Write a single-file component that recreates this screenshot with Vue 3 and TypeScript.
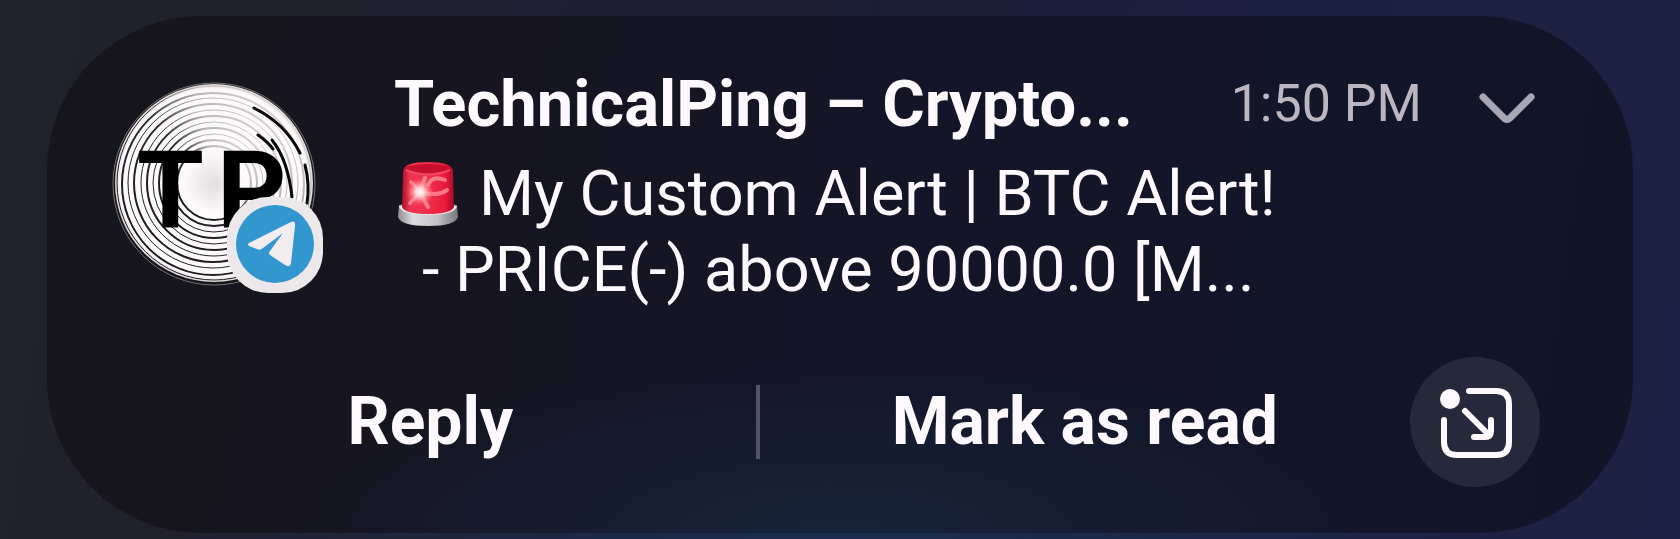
<script setup lang="ts">
const notification = {
  sender: 'TechnicalPing – Crypto...',
  time: '1:50 PM',
  headline: 'My Custom Alert | BTC Alert!',
  detail: '- PRICE(-) above 90000.0 [M...',
}

const rings: { r: number; cx: number; cy: number; w: number }[] = [
  { r: 97, cx: 103, cy: 102, w: 1 },
  { r: 91, cx: 102, cy: 103, w: 2 },
  { r: 85, cx: 102, cy: 102, w: 1 },
  { r: 79, cx: 102, cy: 102, w: 2 },
  { r: 73, cx: 103, cy: 102, w: 1 },
  { r: 67, cx: 103, cy: 102, w: 2 },
  { r: 61, cx: 103, cy: 102, w: 1 },
  { r: 55, cx: 103, cy: 102, w: 2 },
  { r: 49, cx: 103, cy: 102, w: 1 },
  { r: 43, cx: 103, cy: 102, w: 2 },
  { r: 37, cx: 103, cy: 102, w: 2 },
]
</script>

<template>
  <main class="screen">
    <article class="card">
      <div class="content">
        <div class="avatar">
          <svg class="logo" viewBox="0 0 206 206" role="img" aria-label="TechnicalPing">
            <defs>
              <radialGradient id="disc" cx="0.5" cy="0.5" r="0.5">
                <stop offset="0" stop-color="#e2dee1" />
                <stop offset="0.3" stop-color="#fdf9fa" />
                <stop offset="0.95" stop-color="#fdf9fa" />
                <stop offset="1" stop-color="#d8d4d2" />
              </radialGradient>
              <linearGradient id="ringTone" x1="0" y1="1" x2="1" y2="0">
                <stop offset="0" stop-color="#16141c" />
                <stop offset="0.5" stop-color="#2c2a30" />
                <stop offset="0.7" stop-color="#b5b1b4" />
                <stop offset="1" stop-color="#ece8ea" />
              </linearGradient>
            </defs>
            <circle cx="103" cy="103" r="101" fill="#16141c" stroke="#77736f" stroke-width="1" />
            <circle cx="103" cy="102" r="99" fill="url(#disc)" />
            <circle
              v-for="ring in rings"
              :key="ring.r"
              :cx="ring.cx"
              :cy="ring.cy"
              :r="ring.r"
              fill="none"
              stroke="url(#ringTone)"
              :stroke-width="ring.w"
            />
            <g fill="none" stroke="#08070a" stroke-width="3" stroke-linecap="round">
              <path d="M143 27Q174 42 189 72" />
              <path d="M147 54Q157 61 162 68" />
              <path d="M161 59Q177 79 181 116" />
              <path d="M194 84Q199 103 196 122" />
            </g>
            <g class="monogram">
              <text x="26" y="146">T</text>
              <text x="106" y="146">P</text>
            </g>
          </svg>
          <svg class="badge" viewBox="0 0 96 96" role="img" aria-label="Telegram">
            <rect width="96" height="96" rx="41" fill="#ece8e9" />
            <circle cx="48" cy="47" r="39" fill="#3296cf" />
            <path
              d="M22 46L64 25Q69 23 68 29L64 66Q63 71 58 68L43 58Q41 56 43 54L56 36L36 51Q33 54 30 52L22 49Q20 47 22 46Z"
              fill="#f1edee"
            />
          </svg>
        </div>

        <div class="message">
          <header class="heading">
            <h1 class="sender">{{ notification.sender }}</h1>
            <time class="time" datetime="13:50">{{ notification.time }}</time>
            <button class="expand" type="button" aria-label="Expand notification">
              <svg viewBox="0 0 56 32">
                <path d="M4 4L25 25Q28 28 31 25L52 4" />
              </svg>
            </button>
          </header>
          <p class="line">
            <svg class="siren" viewBox="0 0 62 66" role="img" aria-label="Alert">
              <defs>
                <linearGradient id="dome" x1="0" x2="1">
                  <stop offset="0" stop-color="#a8102a" />
                  <stop offset="0.15" stop-color="#ef3550" />
                  <stop offset="0.5" stop-color="#f0304b" />
                  <stop offset="0.85" stop-color="#e8183a" />
                  <stop offset="1" stop-color="#a50a28" />
                </linearGradient>
                <linearGradient id="base" x1="0" x2="1">
                  <stop offset="0" stop-color="#8e8e92" />
                  <stop offset="0.25" stop-color="#dcdcde" />
                  <stop offset="0.65" stop-color="#c4c4c8" />
                  <stop offset="1" stop-color="#77777c" />
                </linearGradient>
                <radialGradient id="glow">
                  <stop offset="0" stop-color="#ffffff" />
                  <stop offset="0.3" stop-color="#ffd5d4" />
                  <stop offset="1" stop-color="#ff6670" stop-opacity="0" />
                </radialGradient>
              </defs>
              <path d="M2 44Q31 38 60 44L61 56Q58 65 31 65Q4 65 1 56Z" fill="url(#base)" />
              <path d="M2 45Q31 40 60 45Q58 54 31 54Q4 54 2 45Z" fill="#e9e8ea" />
              <path d="M6 10Q7 1 31 1Q55 1 56 10L57 46Q54 53 31 53Q8 53 5 46Z" fill="url(#dome)" />
              <ellipse cx="31" cy="8" rx="23" ry="5" fill="#c80f2d" />
              <path d="M9 9Q31 18 53 9" fill="none" stroke="#f04a60" stroke-width="2" />
              <g fill="none" stroke="#ffa0a4" stroke-width="4" stroke-linecap="round" opacity="0.7">
                <path d="M23 31L14 21M23 31L28 17M23 31L13 42M23 31L31 46" />
                <path d="M24 31Q40 36 50 29M31 24Q35 14 48 19" />
              </g>
              <circle cx="23" cy="31" r="14" fill="url(#glow)" />
            </svg>
            <span>{{ notification.headline }}</span>
          </p>
          <p class="line detail">{{ notification.detail }}</p>
        </div>
      </div>

      <footer class="actions">
        <button class="action" type="button">Reply</button>
        <span class="divider"></span>
        <button class="action" type="button">Mark as read</button>
        <button class="popout" type="button" aria-label="Open in pop-up view">
          <svg viewBox="0 0 74 72">
            <g fill="none" stroke="#fdf8fc" stroke-width="6" stroke-linecap="round" stroke-linejoin="round">
              <path d="M31 5H58Q71 5 71 18V56Q71 69 58 69H19Q6 69 6 56V34" />
              <path d="M27 25L51 49" />
              <path d="M53 34V45Q53 51 47 51H36" />
            </g>
            <circle cx="12" cy="13" r="10" fill="#fdf8fc" />
          </svg>
        </button>
      </footer>
    </article>
  </main>
</template>

<style>
body {
  margin: 0;
  background: #1c2040;
}
</style>

<style scoped>
.screen {
  box-sizing: border-box;
  min-height: 100vh;
  padding: 16px 47px 6px;
  display: flex;
  background:
    radial-gradient(ellipse 40% 30% at 50% 100%, #1c2f50 0%, transparent 100%),
    linear-gradient(98deg, #22222c 0%, #20202d 20%, #1b1d36 50%, #1c2040 75%, #1d2143 100%);
  color: #fdf8fc;
  font-family: Roboto, "Liberation Sans", sans-serif;
}

.card {
  box-sizing: border-box;
  flex: 1;
  min-width: 0;
  display: flex;
  flex-direction: column;
  justify-content: space-between;
  padding: 48px 93px 46px 58px;
  border-radius: 154px;
  background:
    radial-gradient(ellipse 36% 34% at 50% 100%, #172339 0%, transparent 100%),
    linear-gradient(98deg, #16161e 0%, #161520 25%, #141528 55%, #121528 100%);
}

.content {
  display: flex;
}

.avatar {
  position: relative;
  flex: none;
  width: 206px;
  height: 206px;
  margin: 17px 77px 0 6px;
}

.logo {
  display: block;
  width: 100%;
}

.monogram {
  font-size: 108px;
  font-weight: 700;
}

.badge {
  position: absolute;
  right: -6px;
  bottom: -6px;
  width: 96px;
  height: 96px;
}

.message {
  flex: 1;
  min-width: 0;
}

.heading {
  display: flex;
  align-items: center;
  height: 80px;
  margin-bottom: 12px;
}

.sender {
  flex: 1;
  margin: 0;
  font-size: 65px;
  font-weight: 700;
  line-height: 80px;
  white-space: nowrap;
}

.time {
  color: #bbb6c0;
  font-size: 52px;
  line-height: 80px;
  white-space: nowrap;
}

.expand {
  display: flex;
  margin: 10px 5px 0 57px;
  padding: 0;
  border: 0;
  background: none;
}

.expand svg {
  width: 56px;
  height: 32px;
  fill: none;
  stroke: #a9a7b4;
  stroke-width: 7;
  stroke-linecap: round;
}

.line {
  display: flex;
  align-items: center;
  gap: 20px;
  margin: 0;
  font-size: 63px;
  line-height: 76px;
  white-space: nowrap;
}

.detail {
  padding-left: 28px;
}

.siren {
  flex: none;
  width: 62px;
  height: 66px;
  margin-left: 3px;
}

.actions {
  display: flex;
  align-items: center;
}

.action {
  flex: 1 1 0;
  padding: 0;
  border: 0;
  background: none;
  color: inherit;
  font: 700 66px/80px Roboto, "Liberation Sans", sans-serif;
  white-space: nowrap;
}

.divider {
  width: 4px;
  height: 74px;
  background: #555562;
}

.popout {
  display: flex;
  align-items: center;
  justify-content: center;
  width: 130px;
  height: 130px;
  padding: 0;
  border: 0;
  border-radius: 50%;
  background: #26293b;
}

.popout svg {
  width: 74px;
  height: 72px;
}
</style>
